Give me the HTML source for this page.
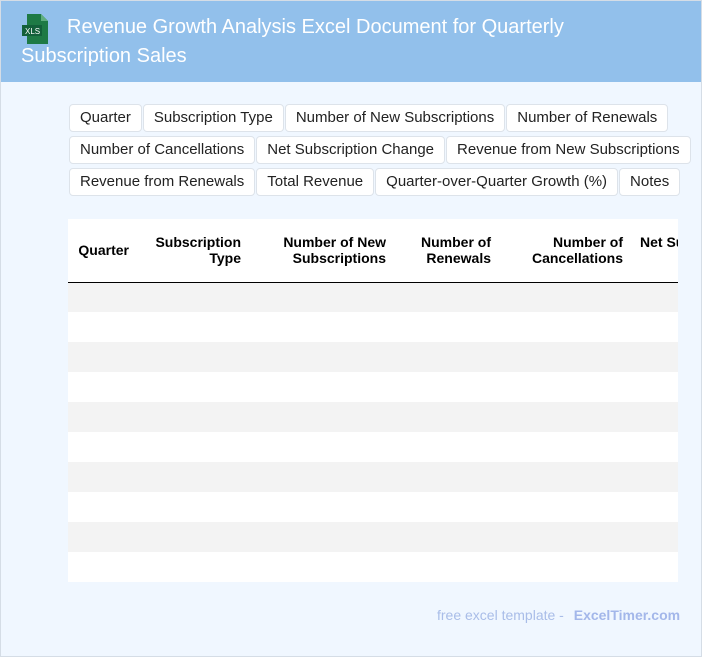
<!DOCTYPE html>
<html><head><meta charset="utf-8"><style>
*{box-sizing:border-box;margin:0;padding:0}
body{width:702px;height:657px;background:#fff;font-family:"Liberation Sans",Arial,sans-serif;position:relative;overflow:hidden}
.page{position:absolute;left:0;top:0;width:702px;height:657px;background:#f0f7ff;border:1px solid #d5dde6}
.hdr{position:absolute;left:0;top:0;width:700px;height:81px;background:#92c0eb}
.hdr .t{position:absolute;left:20px;top:12px;width:620px;color:#fff;font-size:20px;line-height:29px;text-indent:46px}
.icon{position:absolute;left:21px;top:13px}
.tags{position:absolute;left:68px;top:103px;width:630px}
.tag{display:inline-block;height:28px;line-height:26px;padding:0 10px;background:#fff;border:1px solid #dde3ea;border-radius:4px;font-size:15px;color:#222;margin:0 1px 4px 0;vertical-align:top}
.wrap{position:absolute;left:67px;top:218px;width:610px;height:363px;overflow:hidden;background:#fff}
table{width:720px;border-collapse:collapse;background:#fff;table-layout:fixed}
th{height:63px;font-size:14px;font-weight:bold;text-align:right;padding:0 10px;border-bottom:1.5px solid #000;color:#000;line-height:16px}
td{height:30px}
tr:nth-child(even) td{background:#f3f3f3}
.ft{position:absolute;left:436px;top:606px;font-size:14px;color:#a9bde8}
.ft b{color:#a3b7ea;margin-left:6px}
</style></head><body><div class="page">
<div class="hdr">
<svg class="icon" width="28" height="30" viewBox="0 0 28 30"><path d="M5 0h14l7 7v23H5z" fill="#1e7a45"/><path d="M19 0v7h7z" fill="#5fae7e"/><rect x="0" y="11" width="20" height="11" fill="#13603a"/><text x="3" y="20" font-size="8" fill="#fff" font-family="Liberation Sans">XLS</text></svg>
<div class="t">Revenue Growth Analysis Excel Document for Quarterly Subscription Sales</div>
</div>
<div class="tags">
<span class="tag">Quarter</span><span class="tag">Subscription Type</span><span class="tag">Number of New Subscriptions</span><span class="tag">Number of Renewals</span><br>
<span class="tag">Number of Cancellations</span><span class="tag">Net Subscription Change</span><span class="tag">Revenue from New Subscriptions</span><br>
<span class="tag">Revenue from Renewals</span><span class="tag">Total Revenue</span><span class="tag">Quarter-over-Quarter Growth (%)</span><span class="tag">Notes</span>
</div>
<div class="wrap"><table>
<colgroup><col style="width:71px"><col style="width:112px"><col style="width:145px"><col style="width:105px"><col style="width:132px"><col style="width:155px"></colgroup>
<tr><th>Quarter</th><th>Subscription Type</th><th>Number of New Subscriptions</th><th>Number of Renewals</th><th>Number of Cancellations</th><th style="text-align:left;padding-left:7px;vertical-align:top;padding-top:15px;white-space:nowrap">Net Subscription Change</th></tr>
<tr><td></td><td></td><td></td><td></td><td></td><td></td></tr>
<tr><td></td><td></td><td></td><td></td><td></td><td></td></tr>
<tr><td></td><td></td><td></td><td></td><td></td><td></td></tr>
<tr><td></td><td></td><td></td><td></td><td></td><td></td></tr>
<tr><td></td><td></td><td></td><td></td><td></td><td></td></tr>
<tr><td></td><td></td><td></td><td></td><td></td><td></td></tr>
<tr><td></td><td></td><td></td><td></td><td></td><td></td></tr>
<tr><td></td><td></td><td></td><td></td><td></td><td></td></tr>
<tr><td></td><td></td><td></td><td></td><td></td><td></td></tr>
<tr><td></td><td></td><td></td><td></td><td></td><td></td></tr>
</table></div>
<div class="ft">free excel template - <b>ExcelTimer.com</b></div>
</div></body></html>
